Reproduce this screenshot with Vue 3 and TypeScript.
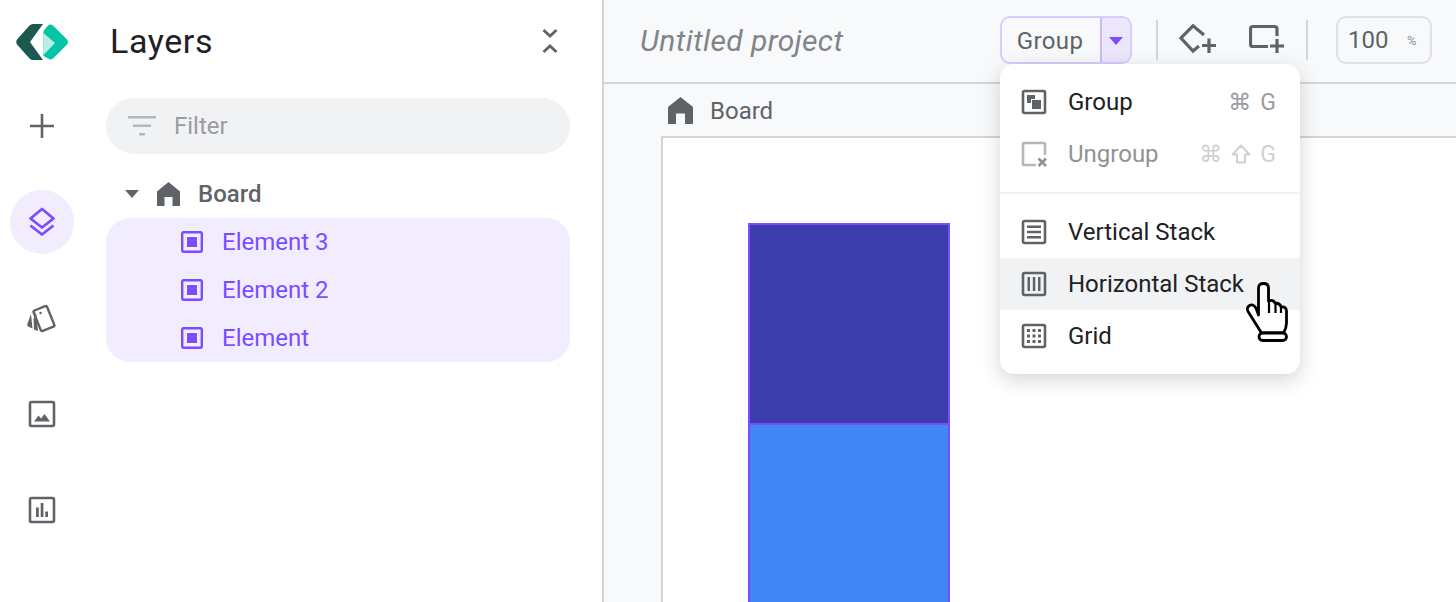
<script setup lang="ts">
interface MenuItem { label: string; icon: string; keys: string[]; disabled?: boolean; hover?: boolean }
const layers: string[] = ['Element 3', 'Element 2', 'Element']
const topItems: MenuItem[] = [
  { label: 'Group', icon: 'group', keys: ['⌘', 'G'] },
  { label: 'Ungroup', icon: 'ungroup', keys: ['⌘', 'shift', 'G'], disabled: true },
]
const stackItems: MenuItem[] = [
  { label: 'Vertical Stack', icon: 'vertical', keys: [] },
  { label: 'Horizontal Stack', icon: 'horizontal', keys: [], hover: true },
  { label: 'Grid', icon: 'grid', keys: [] },
]
</script>

<template>
  <div class="app">
    <nav class="rail">
      <svg class="logo" width="52" height="36" viewBox="0 0 52 36">
        <path d="M17 0H27L14 18L27 36H17Q15 36 13.500 34.500L1 20.500Q-0.500 18 1 15.500L13.500 1.500Q15 0 17 0Z" fill="#1c5a50"/>
        <path d="M27.500 7L32 1.500Q34.500 -0.500 37 1.500L51 15.500Q53 18 51 20.500L37 34.500Q34.500 36.500 32 34.500L27.500 32Z" fill="#05c4a5"/>
        <path d="M27.500 9L39 19L27.500 31Z" fill="#b6efe4"/>
      </svg>
      <svg class="plus" width="26" height="26" viewBox="0 0 26 26"><path d="M13 1V25M1 13H25" stroke="#5f6368" stroke-width="2.600" fill="none"/></svg>
      <div class="rail-active">
        <svg width="28" height="30" viewBox="0 0 28 30" fill="none" stroke="#7c4dff" stroke-width="2.800" stroke-linejoin="round">
          <path d="M14 2L25.500 11.500L14 20.500L2.500 11.500Z"/>
          <path d="M2.500 18.500L14 27.500L25.500 18.500"/>
        </svg>
      </div>
      <svg class="rail-icon cards" width="32" height="30" viewBox="0 0 32 30">
        <rect x="10.500" y="3.500" width="14.500" height="22" rx="1.500" transform="rotate(-22 18 14)" fill="none" stroke="#5f6368" stroke-width="2.400"/>
        <circle cx="14.500" cy="9" r="1.200" fill="#5f6368"/>
        <path d="M5 10L6.500 24.500L2 22.500Q0.500 21.500 1.500 19.500ZM10 8L12 27L8 25.500L7.500 15Z" fill="#5f6368"/>
      </svg>
      <svg class="rail-icon image" width="28" height="28" viewBox="0 0 28 28">
        <rect x="2" y="2" width="24" height="24" rx="1.500" fill="none" stroke="#5f6368" stroke-width="2.600"/>
        <path d="M6 21.500L10.500 15.500L13 18.500L16.500 14L22 21.500Z" fill="#5f6368"/>
      </svg>
      <svg class="rail-icon chart" width="28" height="28" viewBox="0 0 28 28">
        <rect x="2" y="2" width="24" height="24" rx="1.500" fill="none" stroke="#5f6368" stroke-width="2.600"/>
        <path d="M8 11.500H10.800V21H8ZM12.700 7H15.400V21H12.700ZM17.300 15.500H20V21H17.300Z" fill="#5f6368"/>
      </svg>
    </nav>

    <aside class="panel">
      <header class="panel-head">
        <h1 class="panel-title">Layers</h1>
        <svg width="16" height="26" viewBox="0 0 16 26" fill="none" stroke="#5f6368" stroke-width="2.800">
          <path d="M1.500 2L8 8L14.500 2M1.500 24L8 18L14.500 24"/>
        </svg>
      </header>
      <div class="filter">
        <svg width="28" height="20" viewBox="0 0 28 20"><path d="M0 0H28V2.500H0ZM5 8.500H23V11H5ZM11 17H17V19.500H11Z" fill="#b4b6b9"/></svg>
        <span>Filter</span>
      </div>
      <div class="tree-root">
        <span class="caret"></span>
        <svg class="home" width="23" height="24" viewBox="0 0 23 24"><path d="M11.500 0L23 9.500V24H15.500V15H7.500V24H0V9.500Z" fill="#5f6368"/></svg>
        <span>Board</span>
      </div>
      <ul class="tree-list">
        <li v-for="name in layers" :key="name" class="tree-item">
          <svg width="22" height="22" viewBox="0 0 22 22">
            <rect x="1.200" y="1.200" width="19.600" height="19.600" rx="1.500" fill="none" stroke="#7c4dff" stroke-width="2.400"/>
            <rect x="6" y="6" width="10" height="10" fill="#7c4dff"/>
          </svg>
          <span>{{ name }}</span>
        </li>
      </ul>
    </aside>

    <main class="main">
      <header class="topbar">
        <span class="project">Untitled project</span>
        <div class="split">
          <span class="split-label">Group</span>
          <span class="split-arrow"><i></i></span>
        </div>
        <span class="divider first"></span>
        <svg class="tool-a" width="38" height="30" viewBox="0 0 38 30" fill="none" stroke="#5f6368" stroke-width="3.200">
          <path d="M25 11L14 1.800L2 14L14 27L20 22"/>
          <path d="M30 14.500V29M23 21.500H37"/>
        </svg>
        <svg class="tool-b" width="36" height="30" viewBox="0 0 36 30" fill="none" stroke="#5f6368" stroke-width="3.200">
          <path d="M19 22.500H4Q1.500 22.500 1.500 20V5Q1.500 2.500 4 2.500H25.500Q28 2.500 28 5V12"/>
          <path d="M28 15V29M21 22H35"/>
        </svg>
        <span class="divider second"></span>
        <div class="zoom-box"><span class="zoom-num">100</span><span class="zoom-unit">%</span></div>
      </header>
      <div class="crumb">
        <svg width="25" height="27" viewBox="0 0 25 27"><path d="M12.500 0L25 10V27H17V16.500H8V27H0V10Z" fill="#5f6368"/></svg>
        <span>Board</span>
      </div>
      <section class="canvas">
        <div class="stack">
          <div class="block dark"></div>
          <div class="block light"></div>
        </div>
      </section>
    </main>

    <div class="menu">
      <div class="menu-section upper">
        <div v-for="item in topItems" :key="item.label" class="menu-row" :class="{ disabled: item.disabled }">
          <svg v-if="item.icon === 'group'" width="26" height="26" viewBox="0 0 26 26">
            <rect x="2" y="2" width="22" height="22" rx="1.500" fill="none" stroke="#5f6368" stroke-width="2.600"/>
            <path d="M6 6H14V10H10V14H6ZM11 11H20V20H11Z" fill="#5f6368"/>
          </svg>
          <svg v-else width="26" height="26" viewBox="0 0 26 26" fill="none" stroke="#b4b6b9" stroke-width="2.600">
            <path d="M15 24H3.300Q2 24 2 22.700V3.300Q2 2 3.300 2H22.700Q24 2 24 3.300V14"/>
            <path d="M17.500 17.500L25 25M25 17.500L17.500 25" stroke="#909396"/>
          </svg>
          <span class="menu-label">{{ item.label }}</span>
          <span class="keys">
            <template v-for="key in item.keys" :key="key">
              <svg v-if="key === 'shift'" width="20" height="20" viewBox="0 0 20 20" fill="none" stroke="#cfd0d2" stroke-width="2">
                <path d="M10 1.500L18.500 10.500H14V18.500H6V10.500H1.500Z" stroke-linejoin="round"/>
              </svg>
              <b v-else>{{ key }}</b>
            </template>
          </span>
        </div>
      </div>
      <div class="menu-section">
        <div v-for="item in stackItems" :key="item.label" class="menu-row" :class="{ hover: item.hover }">
          <svg width="26" height="26" viewBox="0 0 26 26">
            <rect x="2" y="2" width="22" height="22" rx="1.500" fill="none" stroke="#5f6368" stroke-width="2.600"/>
            <path v-if="item.icon === 'vertical'" d="M6 6.500H20V9H6ZM6 11.800H20V14.300H6ZM6 17H20V19.500H6Z" fill="#5f6368"/>
            <path v-else-if="item.icon === 'horizontal'" d="M6.500 6H9V20H6.500ZM11.800 6H14.300V20H11.800ZM17 6H19.500V20H17Z" fill="#5f6368"/>
            <path v-else d="M6 6H9V9H6ZM11.500 6H14.500V9H11.500ZM17 6H20V9H17ZM6 11.500H9V14.500H6ZM11.500 11.500H14.500V14.500H11.500ZM17 11.500H20V14.500H17ZM6 17H9V20H6ZM11.500 17H14.500V20H11.500ZM17 17H20V20H17Z" fill="#5f6368"/>
          </svg>
          <span class="menu-label">{{ item.label }}</span>
        </div>
      </div>
    </div>

    <svg class="cursor" width="42" height="60" viewBox="0 0 42 60">
      <path d="M12.500 33V6Q12.500 1.500 17.500 1.500T22.500 6V19Q27 17 29 21Q34 21 35 25Q40 24 40.500 29V41Q40.500 46 37.500 51H15.500L3 31Q-0.500 26 3.500 23.500Q7 21.500 10 26Z" fill="#fff" stroke="#000" stroke-width="2.800" stroke-linejoin="round"/>
      <path d="M23 19V31M29.500 22V31M35 25V31" stroke="#000" stroke-width="2.200"/>
      <rect x="13" y="51" width="27.500" height="7.500" rx="3.700" fill="#fff" stroke="#000" stroke-width="2.800"/>
    </svg>
  </div>
</template>

<style scoped>
.app { position: relative; display: flex; width: 1456px; height: 602px; overflow: hidden; background: #fff; font-family: Roboto, "Liberation Sans", sans-serif; }
.rail { width: 84px; flex: none; display: flex; flex-direction: column; align-items: center; }
.logo { margin-top: 24px; }
.plus { margin-top: 53px; }
.rail-active { width: 64px; height: 64px; margin-top: 51px; border-radius: 50%; background: #f1edfe; display: flex; align-items: center; justify-content: center; }
.rail-icon { display: block; }
.cards { margin-top: 50px; }
.image { margin-top: 66px; }
.chart { margin-top: 68px; }
.panel { width: 520px; flex: none; padding: 0 32px 0 22px; box-sizing: border-box; border-right: 2px solid #d3d4d7; }
.panel-head { height: 98px; display: flex; justify-content: space-between; align-items: flex-start; padding: 0 12px 0 5px; box-sizing: border-box; }
.panel-head svg { margin-top: 28px; }
.panel-title { margin: 20px 0 0 -1px; font-size: 34px; line-height: 42px; letter-spacing: 0.6px; font-weight: 400; color: #202124; }
.filter { height: 56px; border-radius: 28px; background: #f1f2f4; display: flex; align-items: center; gap: 18px; padding-left: 22px; color: #9a9c9f; font-size: 24px; }
.tree-root { height: 64px; box-sizing: border-box; padding: 16px 0 0 19px; display: flex; align-items: center; color: #5f6368; font-size: 24px; font-weight: 500; }
.caret { width: 0; height: 0; border: 7.500px solid transparent; border-top: 8px solid #5f6368; border-bottom: 0; }
.home { margin-left: 18px; margin-right: 18px; }
.tree-list { list-style: none; margin: 0; padding: 0; height: 144px; border-radius: 24px; background: #f1edfe; }
.tree-item { height: 48px; display: flex; align-items: center; gap: 19px; padding-left: 75px; color: #7c4dff; font-size: 24px; }
.main { flex: 1; min-width: 0; background: #f8f9fa; display: flex; flex-direction: column; }
.topbar { height: 84px; flex: none; box-sizing: border-box; border-bottom: 2px solid #d3d4d7; display: flex; align-items: center; padding-left: 36px; }
.project { width: 360px; font-size: 30px; letter-spacing: 0.4px; font-style: italic; color: #828487; margin-top: -2px; }
.split { display: flex; height: 48px; margin-top: -2px; box-sizing: border-box; border: 2px solid #d9ccfc; border-radius: 10px; overflow: hidden; }
.split-label { width: 98px; padding: 2px 2px 0 0; box-sizing: border-box; display: flex; align-items: center; justify-content: center; font-size: 24px; letter-spacing: 0.4px; color: #5f6368; }
.split-arrow { width: 28px; display: flex; align-items: center; justify-content: center; background: #ebe6fb; border-left: 2px solid #cbb9fb; }
.split-arrow i { width: 0; height: 0; border: 7px solid transparent; border-top: 8px solid #7c4dff; border-bottom: 0; margin-top: 2px; }
.divider { width: 2px; height: 40px; margin-top: -2px; background: #d3d4d7; flex: none; }
.first { margin-left: 24px; }
.tool-a { margin-left: 21px; margin-top: -4px; }
.tool-b { margin-left: 32px; margin-top: -4px; }
.second { margin-left: 21px; }
.zoom-box { display: flex; align-items: center; width: 96px; height: 48px; margin-left: 28px; margin-top: -2px; box-sizing: border-box; border: 2px solid #e0e1e3; border-radius: 10px; padding-left: 10px; color: #5f6368; font-size: 24px; }
.zoom-num { width: 59px; }
.zoom-unit { font-size: 13px; color: #909396; }
.crumb { height: 52px; flex: none; display: flex; align-items: center; gap: 17px; padding-left: 64px; font-size: 24px; color: #5f6368; box-sizing: border-box; }
.crumb span { padding-top: 2px; }
.canvas { flex: 1; margin-left: 57px; background: #fff; border-left: 2px solid #d3d4d7; border-top: 2px solid #d3d4d7; padding: 85px 0 0 85px; min-height: 0; overflow: hidden; }
.stack { width: 202px; }
.block { box-sizing: border-box; border: 2px solid #7c4dff; }
.dark { height: 202px; background: #3a3dab; }
.light { height: 202px; margin-top: -2px; background: #4285f4; }
.menu { position: absolute; left: 1000px; top: 64px; width: 300px; height: 310px; background: #fff; border-radius: 14px; box-shadow: 0 6px 20px rgba(60, 64, 67, 0.22); }
.menu-section { padding-top: 12px; }
.upper { height: 116px; border-bottom: 2px solid #f1f2f4; }
.menu-row { height: 52px; display: flex; align-items: center; padding: 0 24px 0 21px; color: #202124; font-size: 24px; }
.menu-row.hover { background: #f1f2f4; }
.menu-row.disabled { color: #909396; }
.menu-label { margin-left: 21px; flex: 1; }
.keys { display: flex; align-items: center; gap: 9px; color: #9a9c9f; font-family: Roboto, "DejaVu Sans", sans-serif; font-size: 23px; }
.keys b { font-weight: 400; }
.disabled .keys { color: #cfd0d2; }
.cursor { position: absolute; left: 1246px; top: 282px; }
</style>
